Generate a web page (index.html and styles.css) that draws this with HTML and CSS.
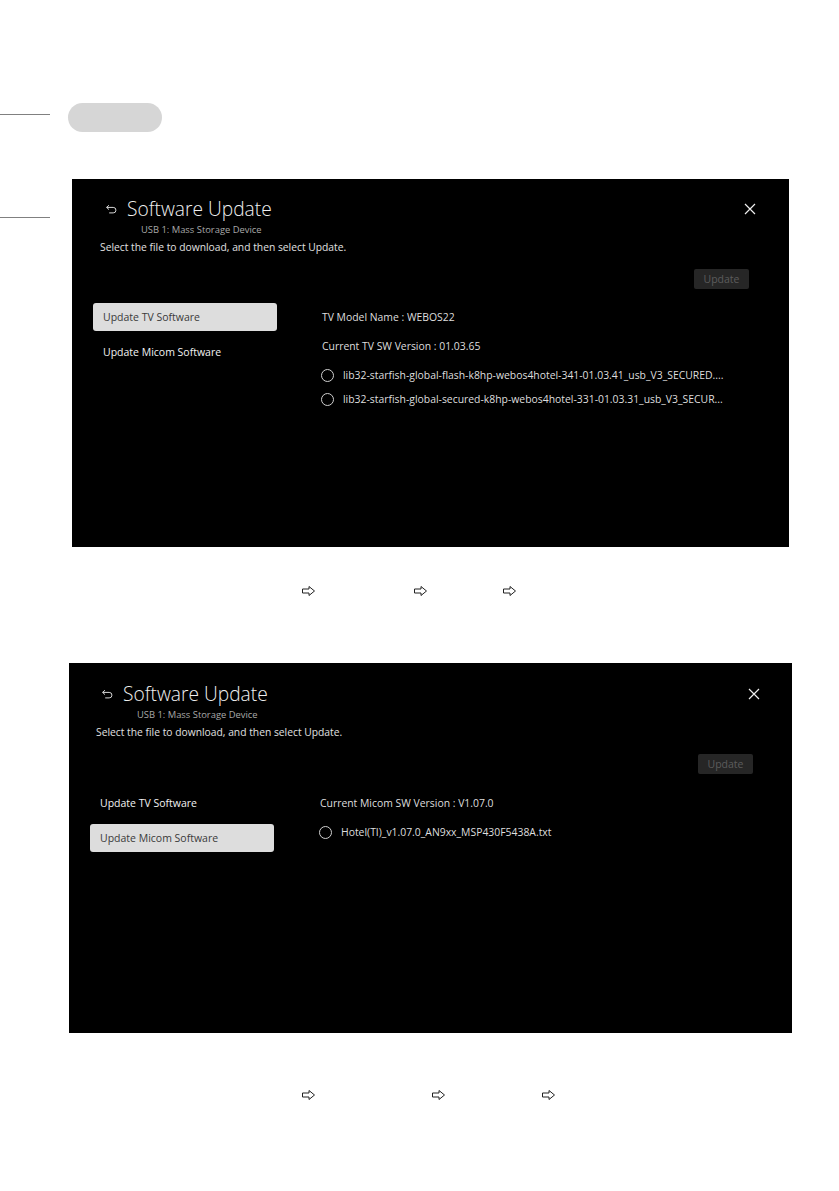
FILE: index.html
```html
<!DOCTYPE html>
<html lang="en">
<head>
  <meta charset="UTF-8">
  <title>Software Update</title>
  <link rel="stylesheet" href="styles.css">
</head>
<body>
  <div class="page">
    <div class="edge-rule"></div>

    <div class="content">
      <div class="section-pill"></div>

      <!-- step 1 : Update TV Software -->
      <div class="screen screen-one">
        <div class="screen-head">
          <svg class="back-icon" width="12" height="10" viewBox="0 0 12 10">
            <path d="M4 1.2 L1.6 3.4 L4 5.6 M1.6 3.4 H8.2 A2.75 2.75 0 0 1 8.2 8.9 H4.2" fill="none" stroke="#d8d8d8" stroke-width="1"/>
          </svg>
          <span class="screen-title">Software Update</span>
          <svg class="close-icon" width="12" height="12" viewBox="0 0 12 12">
            <path d="M1 1 L11 11 M11 1 L1 11" stroke="#eeeeee" stroke-width="1.2"/>
          </svg>
        </div>
        <div class="screen-sub">USB 1: Mass Storage Device</div>
        <div class="screen-hint">Select the file to download, and then select Update.</div>
        <div class="action-row">
          <button class="update-btn">Update</button>
        </div>
        <div class="screen-body">
          <ul class="menu">
            <li class="menu-item selected">Update TV Software</li>
            <li class="menu-item">Update Micom Software</li>
          </ul>
          <div class="details">
            <div class="info">TV Model Name : WEBOS22</div>
            <div class="info">Current TV SW Version : 01.03.65</div>
            <ul class="file-list">
              <li class="file"><span class="radio"></span>lib32-starfish-global-flash-k8hp-webos4hotel-341-01.03.41_usb_V3_SECURED....</li>
              <li class="file"><span class="radio"></span>lib32-starfish-global-secured-k8hp-webos4hotel-331-01.03.31_usb_V3_SECUR...</li>
            </ul>
          </div>
        </div>
      </div>

      <div class="steps">
        <svg class="step-arrow" width="13" height="10" viewBox="0 0 13 10"><polygon points="0.5,3 7,3 7,0.5 12.5,5 7,9.5 7,7 0.5,7" fill="#fff" stroke="#222" stroke-width="1"/></svg>
        <span class="step-gap gap-99"></span>
        <svg class="step-arrow" width="13" height="10" viewBox="0 0 13 10"><polygon points="0.5,3 7,3 7,0.5 12.5,5 7,9.5 7,7 0.5,7" fill="#fff" stroke="#222" stroke-width="1"/></svg>
        <span class="step-gap gap-76"></span>
        <svg class="step-arrow" width="13" height="10" viewBox="0 0 13 10"><polygon points="0.5,3 7,3 7,0.5 12.5,5 7,9.5 7,7 0.5,7" fill="#fff" stroke="#222" stroke-width="1"/></svg>
      </div>

      <!-- step 2 : Update Micom Software -->
      <div class="screen screen-two">
        <div class="screen-head">
          <svg class="back-icon" width="12" height="10" viewBox="0 0 12 10">
            <path d="M4 1.2 L1.6 3.4 L4 5.6 M1.6 3.4 H8.2 A2.75 2.75 0 0 1 8.2 8.9 H4.2" fill="none" stroke="#d8d8d8" stroke-width="1"/>
          </svg>
          <span class="screen-title">Software Update</span>
          <svg class="close-icon" width="12" height="12" viewBox="0 0 12 12">
            <path d="M1 1 L11 11 M11 1 L1 11" stroke="#eeeeee" stroke-width="1.2"/>
          </svg>
        </div>
        <div class="screen-sub">USB 1: Mass Storage Device</div>
        <div class="screen-hint">Select the file to download, and then select Update.</div>
        <div class="action-row">
          <button class="update-btn">Update</button>
        </div>
        <div class="screen-body">
          <ul class="menu">
            <li class="menu-item">Update TV Software</li>
            <li class="menu-item selected">Update Micom Software</li>
          </ul>
          <div class="details">
            <div class="info">Current Micom SW Version : V1.07.0</div>
            <ul class="file-list">
              <li class="file"><span class="radio"></span>Hotel(TI)_v1.07.0_AN9xx_MSP430F5438A.txt</li>
            </ul>
          </div>
        </div>
      </div>

      <div class="steps steps-two">
        <svg class="step-arrow" width="13" height="10" viewBox="0 0 13 10"><polygon points="0.5,3 7,3 7,0.5 12.5,5 7,9.5 7,7 0.5,7" fill="#fff" stroke="#222" stroke-width="1"/></svg>
        <span class="step-gap gap-117"></span>
        <svg class="step-arrow" width="13" height="10" viewBox="0 0 13 10"><polygon points="0.5,3 7,3 7,0.5 12.5,5 7,9.5 7,7 0.5,7" fill="#fff" stroke="#222" stroke-width="1"/></svg>
        <span class="step-gap gap-97"></span>
        <svg class="step-arrow" width="13" height="10" viewBox="0 0 13 10"><polygon points="0.5,3 7,3 7,0.5 12.5,5 7,9.5 7,7 0.5,7" fill="#fff" stroke="#222" stroke-width="1"/></svg>
      </div>
    </div>
  </div>
</body>
</html>
```

FILE: styles.css
```css
body {
  margin: 0;
  background-color: #fff;
  font-family: "Open Sans", "Noto Sans", sans-serif;
  color: #e4e4e4;
}

.page {
  display: grid;
  grid-template-columns: 50px 1fr;
  column-gap: 18px;
  align-items: start;
  padding-top: 103px;
}

.edge-rule {
  margin-top: 11px;
  height: 102px;
  border-top: 1px solid #808080;
  border-bottom: 1px solid #808080;
}

.section-pill {
  width: 94px;
  height: 29px;
  border-radius: 15px;
  background-color: #d6d6d6;
}

.screen {
  background-color: #000;
  box-sizing: border-box;
}
.screen-one {
  margin-top: 47px;
  margin-left: 4px;
  width: 717px;
  height: 368px;
  padding: 19px 33px 0 33px;
}
.screen-two {
  margin-top: 67px;
  margin-left: 1px;
  width: 723px;
  height: 370px;
  padding: 20px 32px 0 32px;
}

.screen-head {
  display: flex;
  align-items: center;
  height: 22px;
}
.back-icon {
  margin-right: 10px;
}
.screen-title {
  font-size: 19.2px;
  font-weight: 300;
  color: #f0f0f0;
  line-height: 22px;
}
.close-icon {
  margin-left: auto;
}

.screen-sub {
  margin-top: 3px;
  margin-left: 36px;
  font-size: 9.4px;
  line-height: 14px;
  color: #a8a8a8;
}
.screen-hint {
  margin-top: 3px;
  margin-left: -5px;
  font-size: 10.3px;
  line-height: 14px;
  color: #e0e0e0;
}

.action-row {
  display: flex;
  justify-content: flex-end;
  margin-top: 15px;
  margin-right: 7px;
}
.update-btn {
  width: 55px;
  height: 20px;
  padding: 0;
  border: none;
  border-radius: 2px;
  background-color: #262626;
  color: #5c5c5c;
  font-family: inherit;
  font-size: 10.5px;
}

.screen-body {
  display: grid;
  grid-template-columns: 184px 1fr;
  column-gap: 45px;
  margin-top: 14px;
  margin-left: -12px;
}
.screen-two .screen-body {
  margin-top: 15px;
  margin-left: -11px;
  column-gap: 46px;
}

.menu {
  list-style: none;
  margin: 0;
  padding: 0;
  display: flex;
  flex-direction: column;
  gap: 7px;
}
.menu-item {
  height: 28px;
  line-height: 28px;
  padding-left: 10px;
  font-size: 10.5px;
  font-weight: 500;
  color: #f2f2f2;
  border-radius: 3px;
}
.menu-item.selected {
  background-color: #dddddd;
  color: #3a3a3a;
}

.info {
  line-height: 29px;
  font-size: 10.4px;
  color: #dedede;
}

.file-list {
  list-style: none;
  margin: 2px 0 0 0;
  padding: 0;
}
.file {
  display: flex;
  align-items: center;
  height: 24px;
  font-size: 10.4px;
  color: #dedede;
  white-space: nowrap;
}
.radio {
  width: 11px;
  height: 11px;
  margin-left: -1px;
  margin-right: 9px;
  border: 1px solid #d0d0d0;
  border-radius: 50%;
}

.steps {
  display: flex;
  align-items: center;
  height: 10px;
  margin-top: 39px;
  padding-left: 234px;
}
.steps-two {
  margin-top: 57px;
}
.step-gap {
  display: block;
}
.gap-99 { width: 99px; }
.gap-76 { width: 76px; }
.gap-117 { width: 117px; }
.gap-97 { width: 97px; }
```
